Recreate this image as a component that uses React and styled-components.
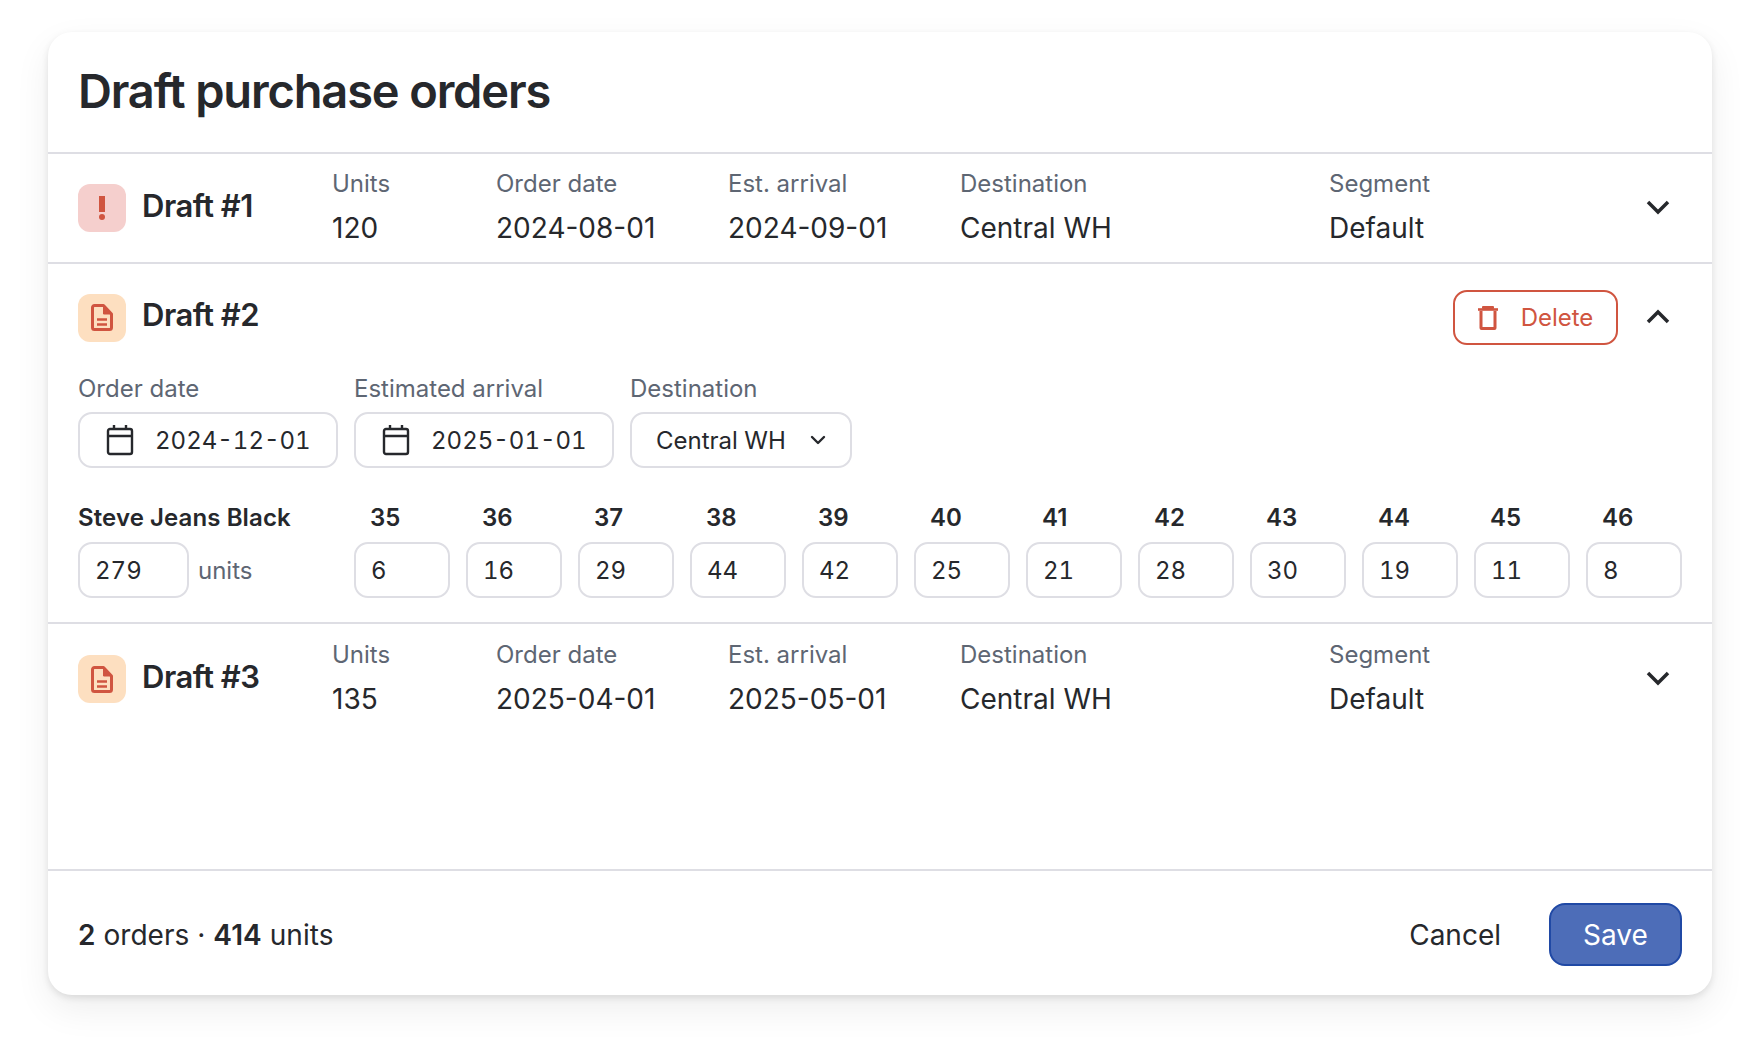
import React from 'react';
import styled, { createGlobalStyle } from 'styled-components';

const GlobalStyle = createGlobalStyle`
  html, body { margin: 0; padding: 0; background: #fff; }
  body { font-family: Inter, "Liberation Sans", sans-serif; color: #26282c; }
  * { box-sizing: border-box; }
  svg { flex-shrink: 0; }
`;

const Page = styled.div`
  width: 1760px;
  height: 1060px;
  padding: 32px 48px 64px;
`;

const Card = styled.div`
  height: 963px;
  display: flex;
  flex-direction: column;
  background: #fff;
  border-radius: 24px;
  box-shadow: 0 3px 7px rgba(0, 0, 0, 0.1), 0 14px 36px rgba(0, 0, 0, 0.07);
`;

const Header = styled.div`
  height: 122px;
  padding: 0 30px;
  display: flex;
  align-items: center;
  border-bottom: 2px solid #dedee4;
`;

const Title = styled.h1`
  margin: 0 0 4px;
  font-size: 47px;
  font-weight: 600;
  letter-spacing: -1.15px;
`;

const SummaryRow = styled.div`
  height: 110px;
  padding: 0 30px;
  display: grid;
  grid-template-columns: 254px 164px 232px 232px 369px 1fr 48px;
  align-items: center;
  border-bottom: ${props => (props.$last ? 'none' : '2px solid #dedee4')};
`;

const DraftName = styled.div`
  display: flex;
  align-items: center;
  gap: 16px;
`;

const IconBox = styled.div`
  width: 48px;
  height: 48px;
  border-radius: 12px;
  display: flex;
  align-items: center;
  justify-content: center;
  color: #d05540;
  background: ${props => (props.$tone === 'red' ? '#f5cfcd' : '#fddfc0')};
`;

const DraftTitle = styled.div`
  font-size: 31px;
  font-weight: 600;
  letter-spacing: -0.5px;
  margin-bottom: 6px;
`;

const Cell = styled.div`
  display: flex;
  flex-direction: column;
  gap: 12px;
  margin-bottom: 3px;
`;

const Label = styled.div`
  font-size: 24px;
  line-height: 30px;
  color: #5e6673;
`;

const Value = styled.div`
  font-size: 28px;
  line-height: 34px;
`;

const Toggle = styled.div`
  width: 48px;
  margin-bottom: 2px;
  display: flex;
  align-items: center;
  justify-content: center;
  color: #26282c;
`;

const Expanded = styled.div`
  height: 360px;
  padding: 26px 30px 0;
  border-bottom: 2px solid #dedee4;
`;

const ExpandedTop = styled.div`
  display: flex;
  align-items: center;
  justify-content: space-between;
  height: 55px;
`;

const TopActions = styled.div`
  display: flex;
  align-items: center;
  gap: 16px;
`;

const DeleteButton = styled.button`
  width: 165px;
  height: 55px;
  display: flex;
  align-items: center;
  justify-content: center;
  gap: 23px;
  font: inherit;
  font-size: 24px;
  color: #d05540;
  background: #fff;
  border: 2px solid #d05540;
  border-radius: 14px;
`;

const Fields = styled.div`
  display: flex;
  gap: 16px;
  margin-top: 29px;
`;

const Field = styled.div`
  display: flex;
  flex-direction: column;
  gap: 8px;
`;

const Control = styled.div`
  width: ${props => props.$width}px;
  height: 56px;
  padding: 0 ${props => props.$pad}px;
  display: flex;
  align-items: center;
  gap: ${props => props.$gap}px;
  font-size: 24px;
  white-space: nowrap;
  font-variant-numeric: tabular-nums;
  border: 2px solid #dedee4;
  border-radius: 14px;
  background: #fff;
`;

const Sizes = styled.div`
  display: grid;
  grid-template-columns: 260px repeat(12, 1fr);
  column-gap: 16px;
  margin-top: 35px;
`;

const ProductName = styled.div`
  font-size: 24px;
  font-weight: 600;
  line-height: 30px;
  letter-spacing: 0.1px;
`;

const SizeHead = styled.div`
  font-size: 24px;
  font-weight: 600;
  line-height: 30px;
  padding-left: 16px;
`;

const StockCell = styled.div`
  display: flex;
  align-items: center;
  gap: 9px;
  margin-top: 9px;
  grid-row: 2;
`;

const Qty = styled.div`
  height: 56px;
  width: ${props => (props.$wide ? '111px' : 'auto')};
  margin-top: ${props => (props.$wide ? '0' : '9px')};
  padding-left: 15px;
  display: flex;
  align-items: center;
  font-size: 24px;
  font-variant-numeric: tabular-nums;
  border: 2px solid #dedee4;
  border-radius: 14px;
`;

const UnitsText = styled.span`
  font-size: 24px;
  color: #5e6673;
`;

const Footer = styled.div`
  margin-top: auto;
  height: 126px;
  padding: 3px 30px 0;
  display: flex;
  align-items: center;
  justify-content: space-between;
  border-top: 2px solid #dedee4;
`;

const Totals = styled.div`
  font-size: 28px;
  letter-spacing: 0.05px;
  b { font-weight: 600; }
`;

const Actions = styled.div`
  display: flex;
  align-items: center;
  gap: 48px;
`;

const CancelButton = styled.button`
  border: none;
  background: none;
  padding: 0;
  font: inherit;
  font-size: 28px;
  color: #26282c;
`;

const SaveButton = styled.button`
  width: 133px;
  height: 63px;
  font: inherit;
  font-size: 28px;
  color: #fff;
  background: #4d6db8;
  border: 2px solid #2049a5;
  border-radius: 16px;
`;

const Chevron = ({ up }) => (
  <svg width="28" height="28" viewBox="0 0 28 28" fill="none" stroke="currentColor" strokeWidth="3.5">
    <path d={up ? 'M4 19l10-10 10 10' : 'M4 9l10 10 10-10'} />
  </svg>
);

const SmallChevron = () => (
  <svg width="18" height="18" viewBox="0 0 18 18" fill="none" stroke="currentColor" strokeWidth="2.4" strokeLinecap="round" strokeLinejoin="round">
    <path d="M3 6l6 6 6-6" />
  </svg>
);

const AlertIcon = () => (
  <svg width="8" height="24" viewBox="0 0 8 24" fill="currentColor">
    <rect x="1" y="0" width="6" height="16" />
    <circle cx="4" cy="21" r="3" />
  </svg>
);

const DocIcon = () => (
  <svg width="22" height="27" viewBox="0 0 22 27" fill="none" stroke="currentColor" strokeWidth="3" strokeLinejoin="round">
    <path d="M3.5 1.5h9l8 8.5v13.5a2 2 0 0 1-2 2h-15a2 2 0 0 1-2-2v-20a2 2 0 0 1 2-2z" />
    <path d="M12.5 1.5l8 8.5h-8z" fill="currentColor" strokeWidth="1" />
    <path d="M6 15.5h10M6 20.5h10" strokeWidth="2.6" />
  </svg>
);

const TrashIcon = () => (
  <svg width="20" height="24" viewBox="0 0 20 24" fill="currentColor">
    <rect x="4" y="0" width="12" height="3" rx="1" />
    <rect x="0" y="2.2" width="20" height="2.6" />
    <path d="M1.5 5h17v17a2 2 0 0 1-2 2h-13a2 2 0 0 1-2-2zM4.5 5v16h11V5z" fillRule="evenodd" />
  </svg>
);

const CalendarIcon = () => (
  <svg width="28" height="32" viewBox="0 0 28 32" fill="none" stroke="#26282c" strokeWidth="2.4">
    <rect x="2" y="5" width="24" height="25" rx="2" />
    <path d="M2 12h24M8 1v5M20 1v5" />
  </svg>
);

const columns = ['Units', 'Order date', 'Est. arrival', 'Destination', 'Segment'];
const sizes = [
  [35, 6], [36, 16], [37, 29], [38, 44], [39, 42], [40, 25],
  [41, 21], [42, 28], [43, 30], [44, 19], [45, 11], [46, 8],
];

const DraftSummary = ({ name, tone, values, last }) => (
  <SummaryRow $last={last}>
    <DraftName>
      <IconBox $tone={tone}>{tone === 'red' ? <AlertIcon /> : <DocIcon />}</IconBox>
      <DraftTitle>{name}</DraftTitle>
    </DraftName>
    {columns.map((label, i) => (
      <Cell key={label}>
        <Label>{label}</Label>
        <Value>{values[i]}</Value>
      </Cell>
    ))}
    <Toggle><Chevron /></Toggle>
  </SummaryRow>
);

const App = () => (
  <Page>
    <GlobalStyle />
    <Card>
      <Header>
        <Title>Draft purchase orders</Title>
      </Header>
      <DraftSummary
        name="Draft #1"
        tone="red"
        values={['120', '2024-08-01', '2024-09-01', 'Central WH', 'Default']}
      />
      <Expanded>
        <ExpandedTop>
          <DraftName>
            <IconBox $tone="orange"><DocIcon /></IconBox>
            <DraftTitle>Draft #2</DraftTitle>
          </DraftName>
          <TopActions>
            <DeleteButton><TrashIcon />Delete</DeleteButton>
            <Toggle><Chevron up /></Toggle>
          </TopActions>
        </ExpandedTop>
        <Fields>
          <Field>
            <Label>Order date</Label>
            <Control $width={260} $pad={26} $gap={21}><CalendarIcon />2024-12-01</Control>
          </Field>
          <Field>
            <Label>Estimated arrival</Label>
            <Control $width={260} $pad={26} $gap={21}><CalendarIcon />2025-01-01</Control>
          </Field>
          <Field>
            <Label>Destination</Label>
            <Control $width={222} $pad={24} $gap={23}>Central WH<SmallChevron /></Control>
          </Field>
        </Fields>
        <Sizes>
          <ProductName>Steve Jeans Black</ProductName>
          {sizes.map(([size]) => <SizeHead key={size}>{size}</SizeHead>)}
          <StockCell>
            <Qty $wide>279</Qty>
            <UnitsText>units</UnitsText>
          </StockCell>
          {sizes.map(([size, qty]) => <Qty key={size}>{qty}</Qty>)}
        </Sizes>
      </Expanded>
      <DraftSummary
        name="Draft #3"
        tone="orange"
        last
        values={['135', '2025-04-01', '2025-05-01', 'Central WH', 'Default']}
      />
      <Footer>
        <Totals><b>2</b> orders · <b>414</b> units</Totals>
        <Actions>
          <CancelButton>Cancel</CancelButton>
          <SaveButton>Save</SaveButton>
        </Actions>
      </Footer>
    </Card>
  </Page>
);

export default App;
